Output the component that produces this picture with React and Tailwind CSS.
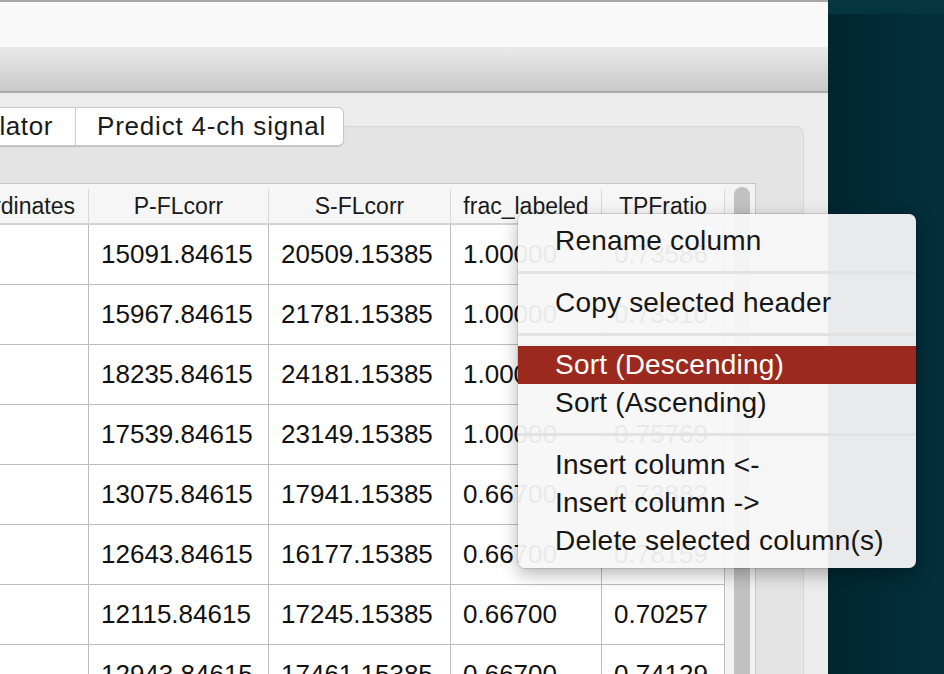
import React from 'react';

const rows = [
  ['15091.84615', '20509.15385', '1.00000', '0.73586'],
  ['15967.84615', '21781.15385', '1.00000', '0.73310'],
  ['18235.84615', '24181.15385', '1.00000', '0.76410'],
  ['17539.84615', '23149.15385', '1.00000', '0.75769'],
  ['13075.84615', '17941.15385', '0.66700', '0.73882'],
  ['12643.84615', '16177.15385', '0.66700', '0.78159'],
  ['12115.84615', '17245.15385', '0.66700', '0.70257'],
  ['12943.84615', '17461.15385', '0.66700', '0.74129'],
];

const headers = ['P-FLcorr', 'S-FLcorr', 'frac_labeled', 'TPFratio'];

const Separator = () => (
  <div className="h-[24px] flex items-center">
    <div className="w-full h-[3px] bg-[#e2e2e2]" />
  </div>
);

const MenuItem = ({ label, active }) => (
  <div
    className={`h-[38px] flex items-center pl-[37px] text-[28px] tracking-[0.2px] whitespace-nowrap ${
      active ? 'bg-[#9c291e] text-white' : 'text-[#161616]'
    }`}
  >
    {label}
  </div>
);

const App = () => {
  return (
    <div
      className="w-[944px] h-[674px] overflow-hidden relative flex bg-[#022935]"
      style={{ fontFamily: '"Liberation Sans", Arial, sans-serif' }}
    >
      {/* App window */}
      <div className="w-[828px] h-full flex flex-col bg-[#ececec] overflow-hidden shrink-0">
        {/* Title / toolbar */}
        <div className="h-[2px] bg-[#a8a8a8] shrink-0" />
        <div className="h-[45px] bg-[#f9f9f9] shrink-0" />
        <div className="h-[44px] bg-gradient-to-b from-[#eaeaea] to-[#c9c9c9] shrink-0" />
        <div className="h-[2px] bg-[#aaaaaa] shrink-0" />

        {/* Tabs */}
        <div className="mt-[14px] h-[39px] flex relative z-10 shrink-0">
          <div className="w-[75px] h-full bg-white border-y border-[#c9c9c9] shadow-[0_1px_1px_rgba(0,0,0,0.15)] flex items-center justify-end pr-[22px] overflow-hidden whitespace-nowrap text-[26px] tracking-[0.6px] text-[#1a1a1a]">
            Calculator
          </div>
          <div className="w-[269px] h-full bg-white border border-[#c9c9c9] rounded-r-[6px] shadow-[0_1px_1px_rgba(0,0,0,0.15)] flex items-center pl-[21px] whitespace-nowrap text-[26px] text-[#1a1a1a] tracking-[0.8px]">
            Predict 4-ch signal
          </div>
        </div>

        {/* Tab pane */}
        <div className="-mt-[20px] ml-[-10px] w-[814px] flex-1 bg-[#e4e4e4] border border-[#d6d6d6] rounded-tr-[8px]">
          <div className="mt-[56px] ml-[9px] w-[756px] flex border-t border-[#c4c4c4] border-r border-r-[#c8c8c8]">
            {/* Data grid */}
            <div className="w-[725px] flex flex-col">
              {/* Header */}
              <div className="h-[41px] grid grid-cols-[89px_180px_182px_151px_123px] bg-[#f6f6f6] border-b-2 border-[#d2d2d2]">
                <div className="h-full py-[5px]">
                  <div className="h-full border-r border-[#d8d8d8] flex items-center justify-end pr-[13px] overflow-hidden whitespace-nowrap text-[23px] text-[#1a1a1a]">
                    Coordinates
                  </div>
                </div>
                {headers.map((h) => (
                  <div key={h} className="h-full py-[5px]">
                    <div className="h-full border-r border-[#d8d8d8] flex items-center justify-center whitespace-nowrap text-[23px] text-[#1a1a1a]">
                      {h}
                    </div>
                  </div>
                ))}
              </div>

              {/* Body */}
              {rows.map((r, i) => (
                <div key={i} className="grid grid-cols-[89px_180px_182px_151px_123px] bg-white">
                  <div className="h-[60px] border-r border-b border-[#bdbdbd]" />
                  {r.map((v, j) => (
                    <div
                      key={j}
                      className="h-[60px] border-r border-b border-[#bdbdbd] flex items-center pl-[12px] text-[26px] text-[#111111] whitespace-nowrap"
                    >
                      {v}
                    </div>
                  ))}
                </div>
              ))}
            </div>

            {/* Scrollbar */}
            <div className="w-[31px] bg-[#f3f3f3] flex">
              <div className="ml-[9px] mt-[3px] w-[16px] h-[620px] rounded-full bg-[#c1c1c1]" />
            </div>
          </div>
        </div>
      </div>

      {/* Desktop background */}
      <div className="flex-1 h-full flex flex-col bg-gradient-to-r from-[#012631] to-[#03303c]">
        <div className="h-[14px] bg-[#063542]" />
      </div>

      {/* Context menu */}
      <div className="absolute left-[518px] top-[214px] w-[398px] py-[8px] rounded-[7px] bg-[rgba(246,246,246,0.94)] shadow-[0_6px_18px_rgba(0,0,0,0.3)] ring-1 ring-black/10 overflow-hidden">
        <MenuItem label="Rename column" />
        <Separator />
        <MenuItem label="Copy selected header" />
        <Separator />
        <MenuItem label="Sort (Descending)" active />
        <MenuItem label="Sort (Ascending)" />
        <Separator />
        <MenuItem label="Insert column <-" />
        <MenuItem label="Insert column ->" />
        <MenuItem label="Delete selected column(s)" />
      </div>
    </div>
  );
};

export default App;
